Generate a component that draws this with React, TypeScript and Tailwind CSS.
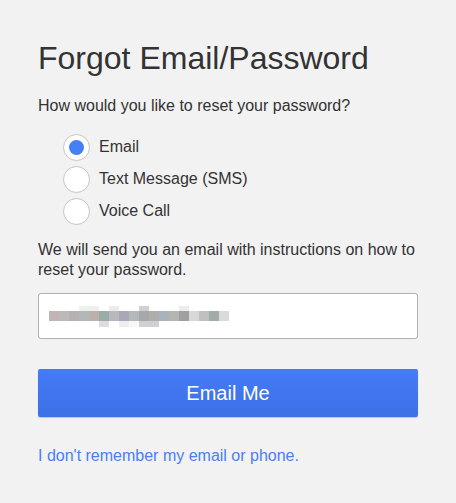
import React from 'react';

const blurMain = [
  '#c0b4b4', '#bababa', '#b4b0b4', '#b0b8b8', '#bcb0ac', '#98aca8', '#b8b8bc', '#a8a8b8', '#b4b8b8',
  '#a8a8a8', '#b0aca8', '#a8b4bc', '#b4b4b0', '#a0a0a4', '#d8d8d8', '#c0c0c0', '#a0aca8', '#d8dcdc',
];
const blurTop: Record<number, string> = { 3: '#eef0ee', 4: '#eef0ee', 6: '#ececec', 9: '#d0d0d0', 13: '#ececec' };
const blurBottom: Record<number, string> = { 5: '#dcdce0', 7: '#f0ecf0', 8: '#f8f8f8', 9: '#d0d0d4', 10: '#d0d0d4' };

function BlurredValue() {
  return (
    <svg width="180" height="21" viewBox="0 0 180 21" className="block">
      {Object.entries(blurTop).map(([i, c]) => (
        <rect key={'t' + i} x={Number(i) * 10} y={0} width={10} height={5} fill={c} />
      ))}
      {blurMain.map((c, i) => (
        <rect key={'m' + i} x={i * 10} y={5} width={10} height={10} fill={c} />
      ))}
      {Object.entries(blurBottom).map(([i, c]) => (
        <rect key={'b' + i} x={Number(i) * 10} y={15} width={10} height={6} fill={c} />
      ))}
    </svg>
  );
}

function Radio({ label, checked }: { label: string; checked?: boolean }) {
  return (
    <label className="flex items-center h-8 gap-[9px]">
      <span className="w-[27px] h-[27px] rounded-full bg-white border border-[#c4c4c4] flex items-center justify-center">
        {checked && <span className="w-[15px] h-[15px] rounded-full bg-[#4580f6]" />}
      </span>
      <span className="text-[16px] text-[#333]">{label}</span>
    </label>
  );
}

export default function App() {
  return (
    <div
      className="w-[456px] h-[503px] bg-[#f2f2f2] px-[38px] pt-[38px]"
      style={{ fontFamily: '"Liberation Sans", Arial, sans-serif' }}
    >
      <h1 className="text-[32px] leading-[40px] text-[#333]">Forgot Email/Password</h1>
      <p className="mt-[18px] text-[16px] leading-[20px] text-[#333]">How would you like to reset your password?</p>

      <div className="mt-[15px] pl-[25px] flex flex-col">
        <Radio label="Email" checked />
        <Radio label="Text Message (SMS)" />
        <Radio label="Voice Call" />
      </div>

      <p className="mt-[13px] text-[16px] leading-[20px] text-[#333]">
        We will send you an email with instructions on how to reset your password.
      </p>

      <div className="mt-[13px] h-[46px] bg-white border border-[#b0b0b0] rounded-[3px] flex items-center pl-[10px]">
        <BlurredValue />
      </div>

      <button className="mt-[30px] w-full h-[48px] rounded-[2px] bg-gradient-to-b from-[#457bf7] to-[#3b70e6] text-white text-[20px] shadow-[0_1px_1px_rgba(0,0,0,0.2)]">
        Email Me
      </button>

      <a className="block mt-[29px] text-[16px] leading-[20px] text-[#4a7ef5]" href="#">
        I don't remember my email or phone.
      </a>
    </div>
  );
}
